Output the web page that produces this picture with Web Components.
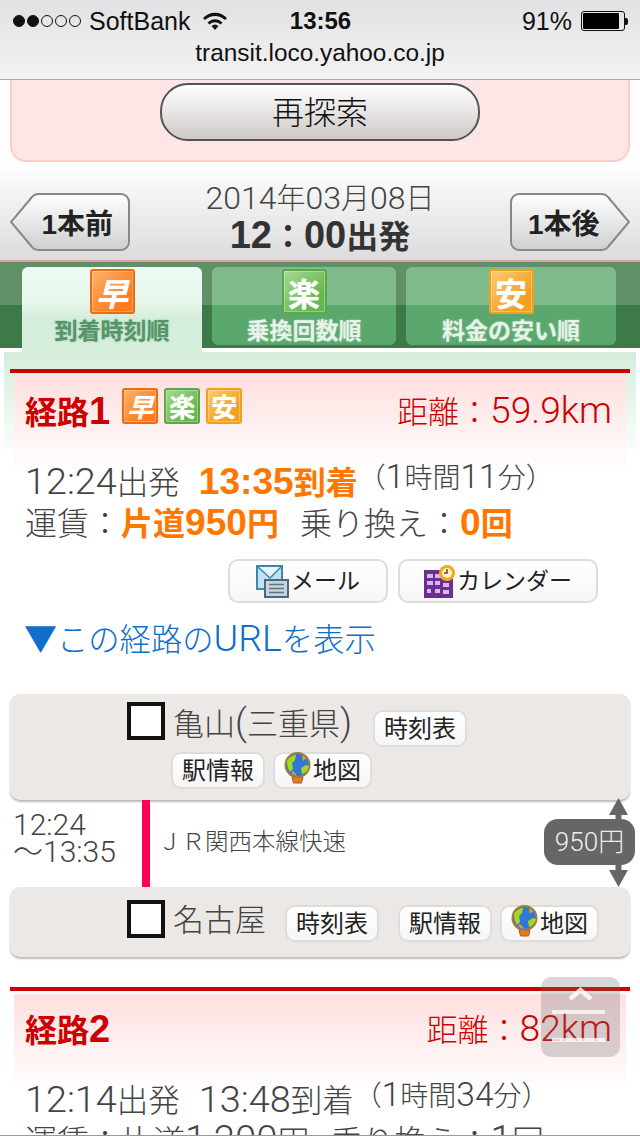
<!DOCTYPE html>
<html lang="ja">
<head>
<meta charset="utf-8">
<title>transit.loco.yahoo.co.jp</title>
<style>
  html, body { margin: 0; padding: 0; background: #fff; }
  body { width: 640px; height: 1136px; overflow: hidden; position: relative;
    font-family: "Liberation Sans", "Noto Sans CJK JP", sans-serif; color: #444; }
  /* hairline of the browser toolbar at the very bottom */
  body::after { content: ""; position: absolute; left: 0; right: 0; bottom: 0; height: 1px; background: #999; }
</style>
</head>
<body>
<status-bar></status-bar>
<research-panel></research-panel>
<date-nav></date-nav>
<sort-tabs></sort-tabs>
<route-list>
  <route-card name="経路1" badges="早,楽,安" distance="距離：59.9km" depart="12:24出発" arrive="13:35到着" hot duration="（1時間11分）" fare="片道950円" transfer="0回">
    <trip-actions></trip-actions>
    <station-box name="亀山(三重県)" wrap></station-box>
    <line-segment from="12:24" to="～13:35" line="ＪＲ関西本線快速" price="950円"></line-segment>
    <station-box name="名古屋"></station-box>
  </route-card>
  <route-card class="second" name="経路2" distance="距離：82km" depart="12:14出発" arrive="13:48到着" duration="（1時間34分）" fare="片道1,200円" transfer="1回"></route-card>
</route-list>
<scroll-top></scroll-top>

<script>
const FONT = '"Liberation Sans", "Noto Sans CJK JP", sans-serif';
const LIGHT = 'Roboto, "Noto Sans CJK JP", sans-serif';

// the latin glyphs of the reference run larger than its kanji
const lat = s => s.replace(/[\x21-\x7e]+/g, m => `<span class="l">${m}</span>`);

// helper: each element fills its own open shadow root
class Base extends HTMLElement {
  render(html) {
    if (!this.shadowRoot) this.attachShadow({ mode: "open" });
    this.shadowRoot.innerHTML = html;
  }
}

class StatusBar extends Base {
  connectedCallback() {
    this.render(`<style>
      :host { display: block; height: 79px; border-bottom: 1px solid #aaa; color: #111;
        background: linear-gradient(#e1e1e3, #f4f3f3); font-family: ${FONT}; }
      .top { display: grid; grid-template-columns: 1fr auto 1fr; align-items: center; height: 42px; padding: 0 12px 0 13px; font-size: 25px; }
      .left, .right { display: flex; align-items: center; }
      .right { justify-content: flex-end; }
      .dots { display: flex; gap: 2px; margin-right: 8px; }
      .dots i { width: 12px; height: 12px; border-radius: 50%; border: 1px solid #111; box-sizing: border-box; }
      .dots i.on { background: #111; }
      .time { font-weight: bold; font-size: 24px; }
      svg { display: block; }
      .batt { width: 44px; height: 20px; border: 1px solid #111; border-radius: 3px; box-sizing: border-box; padding: 1px; margin-left: 9px; }
      .batt b { display: block; height: 100%; width: 91%; background: #000; border-radius: 1px; }
      .nub { width: 3px; height: 7px; background: #111; margin-left: 0; border-radius: 0 2px 2px 0; }
      .url { text-align: center; font-size: 24.4px; line-height: 26px; margin-top: -2px; }
    </style>
    <div class="top">
      <div class="left">
        <div class="dots"><i class="on"></i><i class="on"></i><i></i><i></i><i></i></div>
        <span>SoftBank</span>
        <svg width="24" height="18" viewBox="0 0 24 18" style="margin-left:13px"><path d="M0 6C7-1 17-1 24 6l-2 2C16 2.500 8 2.500 2 8z M4.500 10.500c4.500-4.500 10.500-4.500 15 0l-2 2c-3.500-3-7.500-3-11 0z M8.500 14c2.500-2 4.500-2 7 0L12 18z" fill="#111"/></svg>
      </div>
      <div class="time">13:56</div>
      <div class="right"><span>91%</span><div class="batt"><b></b></div><div class="nub"></div></div>
    </div>
    <div class="url">transit.loco.yahoo.co.jp</div>`);
  }
}

class ResearchPanel extends Base {
  connectedCallback() {
    this.render(`<style>
      :host { display: block; margin: 0 10px; height: 82px; box-sizing: border-box; padding-top: 3px;
        background: #ffe6e6; border: 2px solid #fcc; border-top: 0; border-radius: 0 0 16px 16px; font-family: ${FONT}; }
      button { display: block; margin: 0 auto; width: 320px; height: 58px; border-radius: 28px; border: 2px solid #555;
        background: linear-gradient(#fff, #cfc9c9); font: 300 32px/50px ${LIGHT}; color: #111; padding: 2px 0 0; }
    </style><button>再探索</button>`);
  }
}

class NavButton extends Base {
  connectedCallback() {
    const next = this.hasAttribute("next");
    const d = next ? "M9 1H92a8 8 0 0 1 6 3L119 29L98 54a8 8 0 0 1-6 3H9a8 8 0 0 1-8-8V9a8 8 0 0 1 8-8z"
                   : "M111 1H28a8 8 0 0 0-6 3L1 29L22 54a8 8 0 0 0 6 3H111a8 8 0 0 0 8-8V9a8 8 0 0 0-8-8z";
    this.render(`<style>
      :host { display: block; position: relative; width: 120px; height: 58px; font-family: ${FONT}; }
      svg { display: block; }
      span { position: absolute; top: 0; bottom: 0; display: flex; align-items: center; font-size: 28px; font-weight: bold; color: #222; ${next ? "left: 18px" : "right: 17px"}; }
    </style>
    <svg width="120" height="58" viewBox="0 0 120 58">
      <defs><linearGradient id="g" x1="0" y1="0" x2="0" y2="1"><stop offset="0" stop-color="#fff"/><stop offset="1" stop-color="#cfcfcf"/></linearGradient></defs>
      <path d="${d}" fill="url(#g)" stroke="#888" stroke-width="2"/>
    </svg><span><slot></slot></span>`);
  }
}

class DateNav extends Base {
  connectedCallback() {
    this.render(`<style>
      :host { display: flex; justify-content: space-between; align-items: flex-start; height: 100px; box-sizing: border-box;
        padding: 31px 10px 0; border-bottom: 2px solid #d9a6a0; background: linear-gradient(#fff, #dcdcdc); font-family: ${LIGHT}; }
      .date { text-align: center; color: #444; margin-top: -11px; }
      .d { font-size: 29px; line-height: 34px; font-weight: 300; white-space: nowrap; }
      .d .l { font-size: 32px; line-height: 1; }
      .t { font: bold 32px/38px ${FONT}; color: #333; white-space: nowrap; }
      .t .l { font-size: 38px; line-height: 1; }
    </style>
    <nav-button>1本前</nav-button>
    <div class="date"><div class="d">${lat("2014年03月08日")}</div><div class="t">${lat("12：00出発")}</div></div>
    <nav-button next>1本後</nav-button>`);
  }
}

const BADGE = { "早": ["#ff7b1c", "#ffb26a", "#f26a10"], "楽": ["#66b84e", "#a6d890", "#5aa848"], "安": ["#f3a01f", "#fccb72", "#eea020"] };

class RankBadge extends Base {
  connectedCallback() {
    const k = this.getAttribute("kind");
    const s = +this.getAttribute("size") || 36;
    const [base, light, edge] = BADGE[k];
    this.render(`<style>
      :host { display: block; width: ${s}px; height: ${s}px; }
      div { width: 100%; height: 100%; box-sizing: border-box; border: 2px solid ${edge}; border-radius: 3px; display: flex; align-items: center; justify-content: center;
        box-shadow: inset 0 0 0 1px rgba(255,255,255,.3);
        background: linear-gradient(135deg, ${light}, ${base} 75%); color: #fff; font: bold ${Math.round(s * .72)}px/1 "Noto Sans CJK JP", sans-serif;
        ${k === "早" ? "font-style: italic;" : ""} text-shadow: 0 0 1px rgba(255,255,255,.7); }
    </style><div>${k}</div>`);
  }
}

class SortTab extends Base {
  connectedCallback() {
    const on = this.hasAttribute("active");
    this.render(`<style>
      :host { display: flex; flex-direction: column; align-items: center; box-sizing: border-box; width: ${this.getAttribute("w")}px; height: ${on ? 85 : 78}px; padding-top: 2px;
        border-radius: ${on ? "6px 6px 0 0" : "6px"}; font-family: ${FONT};
        background: ${on ? "linear-gradient(#ecf9f1 0, #e6f7ec 42%, #d4eedb 60%, #d4eedb)" : "linear-gradient(#80bb8c 0, #80bb8c 38px, #5aa86e 38px, #5aa86e)"}; }
      .label { margin-top: 4px; font-size: 23px; line-height: 26px; font-weight: bold; white-space: nowrap; color: ${on ? "#56946a" : "#e6f3e9"}; text-shadow: 0 0 2px ${on ? "rgba(86,148,106,.6)" : "rgba(255,255,255,.5)"}; }
    </style><rank-badge kind="${this.getAttribute("kind")}" size="45"></rank-badge><div class="label"><slot></slot></div>`);
  }
}

class SortTabs extends Base {
  connectedCallback() {
    this.render(`<style>
      :host { display: flex; align-items: flex-start; gap: 10px; height: 90px; box-sizing: border-box; padding: 5px 0 0 22px;
        background: linear-gradient(#5f9068 0, #5f9068 43px, #3c7a49 43px, #3c7a49 86px, #fff 86px); }
    </style>
    <sort-tab active kind="早" w="180">到着時刻順</sort-tab>
    <sort-tab kind="楽" w="184">乗換回数順</sort-tab>
    <sort-tab kind="安" w="210">料金の安い順</sort-tab>`);
  }
}

class RouteList extends Base {
  connectedCallback() {
    this.render(`<style>
      :host { display: block; margin: 0 4px; padding: 17px 6px 0; background: linear-gradient(#d4eedb 0, #fbfefc 100px, #fff 100px); }
    </style><slot></slot>`);
  }
}

class RouteCard extends Base {
  connectedCallback() {
    const a = n => this.getAttribute(n) || "";
    const hot = this.hasAttribute("hot") ? "hot" : "";
    const badges = a("badges") ? a("badges").split(",").map(k => `<rank-badge kind="${k}"></rank-badge>`).join("") : "";
    this.render(`<style>
      :host { display: block; border-top: 4px solid #c00; font-family: ${LIGHT}; color: #444; font-weight: 300; }
      :host(.second) { margin-top: 30px; }
      .head { margin: 3px 4px 0; height: 96px; box-sizing: border-box; padding: 12px 14px 0 11px; display: flex; align-items: flex-start;
        background: linear-gradient(#ffdfdf, #fff); color: #c00; }
      .name { font: bold 32px/50px ${FONT}; white-space: nowrap; }
      .name .l { font-size: 38px; }
      .badges { display: flex; gap: 6px; margin-left: 12px; }
      .dist { margin-left: auto; font-size: 31px; line-height: 50px; white-space: nowrap; }
      .row { padding-left: 15px; font-size: 31.500px; line-height: 42px; height: 42px; white-space: nowrap; }
      .l { font-size: 1.2em; line-height: 1; }
      .t { margin: -9px 0 -2px; }
      .arr { margin-left: 19px; }
      .big { font-size: 32px; }
      .hot { color: #f70; font: bold 32px/1 ${FONT}; }
      .hot .l { font-size: 1.16em; }
      .dur { font-size: 28px; position: relative; top: -6px; }
      .sp { margin-left: 21px; font-size: 32px; }
    </style>
    <div class="head"><div class="name">${lat(a("name"))}</div><div class="badges">${badges}</div><div class="dist">${lat(a("distance"))}</div></div>
    <div class="row t"><span>${lat(a("depart"))}</span><span class="arr ${hot}">${lat(a("arrive"))}</span><span class="dur">${lat(a("duration"))}</span></div>
    <div class="row"><span class="big">運賃：</span><span class="big ${hot}">${lat(a("fare"))}</span><span class="sp">乗り換え：</span><span class="big ${hot}">${lat(a("transfer"))}</span></div>
    <slot></slot>`);
  }
}

class PillButton extends Base {
  connectedCallback() {
    const big = this.hasAttribute("big");
    this.render(`<style>
      :host { display: inline-flex; align-items: center; justify-content: center; box-sizing: border-box; height: ${big ? 44 : 37}px; padding: 0 ${big ? 0 : 9}px;
        border: 2px solid #ddd; border-radius: 10px; background: linear-gradient(#fff, #f6f6f6); color: #222; font: ${big ? 23 : 24}px/1 ${FONT}; white-space: nowrap; }
    </style><slot></slot>`);
  }
}

const ICONS = {
  mail: `<svg width="33" height="33" viewBox="0 0 33 33" style="display:block;margin-right:2px"><rect x="1" y="1" width="25" height="23" fill="#bfe3f5" stroke="#3d87aa" stroke-width="2"/><path d="M2 2l12 11L25 2" fill="#e4f5fc" stroke="#3d87aa" stroke-width="1.500"/><rect x="9" y="15" width="23" height="17" fill="#c9d4da" stroke="#4d6878" stroke-width="2"/><path d="M13 19.500h15M13 23.500h15M13 27.500h15" stroke="#5d7584" stroke-width="1.500"/></svg>`,
  cal: `<svg width="31" height="33" viewBox="0 0 31 33" style="display:block;margin-right:2px"><rect x="0" y="5" width="29" height="28" fill="#6b2f94"/><path d="M3 9h6v4H3zM11 9h6v4h-6zM3 16h6v4H3zM11 16h5v4h-5zM19 18h6v4h-6zM11 24h5v4h-5zM19 25h6v4h-6zM3 24h4v4H3z" fill="#d8b8ee"/><circle cx="23" cy="8" r="8" fill="#f5a81f"/><circle cx="23" cy="8" r="5" fill="#fff2c8"/><path d="M23 4v4h-3" stroke="#6b4a10" stroke-width="1.500" fill="none"/></svg>`,
  globe: `<svg width="27" height="32" viewBox="0 0 27 32" style="display:block;margin-top:-5px;margin-right:2px"><path d="M8 25h11l-1.500 6h-8z" fill="#e47a20" stroke="#a85a20"/><circle cx="13.500" cy="13" r="12" fill="#2f78d8" stroke="#a87a3a" stroke-width="2"/><path d="M3 9c3-5 7-6 9-6l-1 5-3 3 1 6-3 3c-2-3-3-7-3-11zM17 16l5-3 3 1c-1 4-3 7-7 8z" fill="#a6d81c"/><path d="M8 19l3 2 2 3-5-2zM18 3l4 3-3 3z" fill="#f0a020"/></svg>`
};

class TripActions extends Base {
  connectedCallback() {
    this.render(`<style>
      :host { display: block; font-family: ${LIGHT}; font-weight: 300; padding-bottom: 34px; }
      .btns { display: flex; gap: 10px; padding: 14px 0 0 218px; height: 44px; }
      pill-button:nth-child(1) { width: 160px; }
      pill-button:nth-child(2) { width: 200px; }
      a { display: block; margin: 17px 0 0 14px; height: 40px; font-size: 31.300px; line-height: 42px; color: #0f6fca; text-decoration: none; white-space: nowrap; }
      .l { font-size: 1.2em; line-height: 1; }
      .tri { font-family: "Noto Sans CJK JP", sans-serif; font-weight: 400; font-size: 33px; line-height: 1; }
    </style>
    <div class="btns"><pill-button big>${ICONS.mail}メール</pill-button><pill-button big>${ICONS.cal}カレンダー</pill-button></div>
    <a><span class="tri">▼</span>${lat("この経路のURLを表示")}</a>`);
  }
}

class StationBox extends Base {
  connectedCallback() {
    const wrap = this.hasAttribute("wrap");
    const name = lat(this.getAttribute("name"));
    const map = `<pill-button>${ICONS.globe}地図</pill-button>`;
    const table = `<pill-button class="tt">時刻表</pill-button>`;
    const info = `<pill-button class="info">駅情報</pill-button>`;
    this.render(`<style>
      :host { display: block; box-sizing: border-box; height: ${wrap ? 106 : 70}px; background: #ece8e6; border-radius: 10px; box-shadow: 0 2px 2px #bbb; font-family: ${LIGHT}; font-weight: 300; color: #444; }
      .a { display: flex; align-items: flex-start; padding: 8px 0 0 117px; }
      .two { padding-top: 13px; }
      .sq { box-sizing: border-box; width: 38px; height: 38px; border: 4px solid #111; background: #fff; flex: none; }
      .n { font-size: 31px; line-height: 46px; margin-left: 8px; white-space: nowrap; }
      .two .n { margin-top: -2px; }
      .l { font-size: 1.2em; line-height: 1; }
      .a .tt { margin: 8px 0 0 21px; }
      .two pill-button { margin-top: 5px; }
      .two .tt { margin: 5px 0 0 19px; }
      .two .info { margin-left: 19px; }
      .two pill-button:last-child { margin-left: 8px; }
      .b { display: flex; gap: 8px; padding: 4px 0 0 161px; }
    </style>
    ${wrap
      ? `<div class="a"><div class="sq"></div><div class="n">${name}</div>${table}</div><div class="b">${info}${map}</div>`
      : `<div class="a two"><div class="sq"></div><div class="n">${name}</div>${table}${info}${map}</div>`}
    `);
  }
}

class LineSegment extends Base {
  connectedCallback() {
    const a = n => this.getAttribute(n);
    this.render(`<style>
      :host { display: flex; position: relative; height: 87px; font-family: ${LIGHT}; font-weight: 300; color: #444; }
      .time { width: 132px; padding: 11px 0 0 3px; box-sizing: border-box; font-size: 30px; line-height: 27px; white-space: pre; }
      .bar { width: 8px; background: #f05; }
      .name { margin-left: 8px; font-size: 23.500px; line-height: 84px; white-space: nowrap; }
      .price { position: absolute; right: -5px; top: 19px; width: 91px; height: 46px; border-radius: 14px; background: #666; color: #eee; font-size: 26px; line-height: 46px; text-align: center; }
      svg { position: absolute; right: 2px; top: -2px; }
    </style>
    <div class="time">${a("from")}
${a("to")}</div><div class="bar"></div><div class="name">${a("line")}</div>
    <svg width="19" height="89" viewBox="0 0 19 89"><path d="M9.500 0l9.500 17h-6.500v55h6.500l-9.500 17-9.500-17h6.500V17H0z" fill="#666"/></svg>
    <div class="price">${a("price")}</div>`);
  }
}

class ScrollTop extends Base {
  connectedCallback() {
    this.render(`<style>
      :host { position: absolute; left: 541px; top: 977px; width: 79px; height: 80px; border-radius: 10px; background: rgba(110,110,110,.28); }
      svg { display: block; }
    </style>
    <svg width="79" height="80" viewBox="0 0 79 80"><path d="M29 22l10.500-9 10.500 9" fill="none" stroke="#fff" stroke-opacity=".8" stroke-width="4.500"/><path d="M11 35h53M11 63h53" stroke="#fff" stroke-opacity=".75" stroke-width="4"/></svg>`);
  }
}

customElements.define("status-bar", StatusBar);
customElements.define("research-panel", ResearchPanel);
customElements.define("nav-button", NavButton);
customElements.define("date-nav", DateNav);
customElements.define("rank-badge", RankBadge);
customElements.define("sort-tab", SortTab);
customElements.define("sort-tabs", SortTabs);
customElements.define("route-list", RouteList);
customElements.define("route-card", RouteCard);
customElements.define("pill-button", PillButton);
customElements.define("trip-actions", TripActions);
customElements.define("station-box", StationBox);
customElements.define("line-segment", LineSegment);
customElements.define("scroll-top", ScrollTop);
</script>
</body>
</html>
